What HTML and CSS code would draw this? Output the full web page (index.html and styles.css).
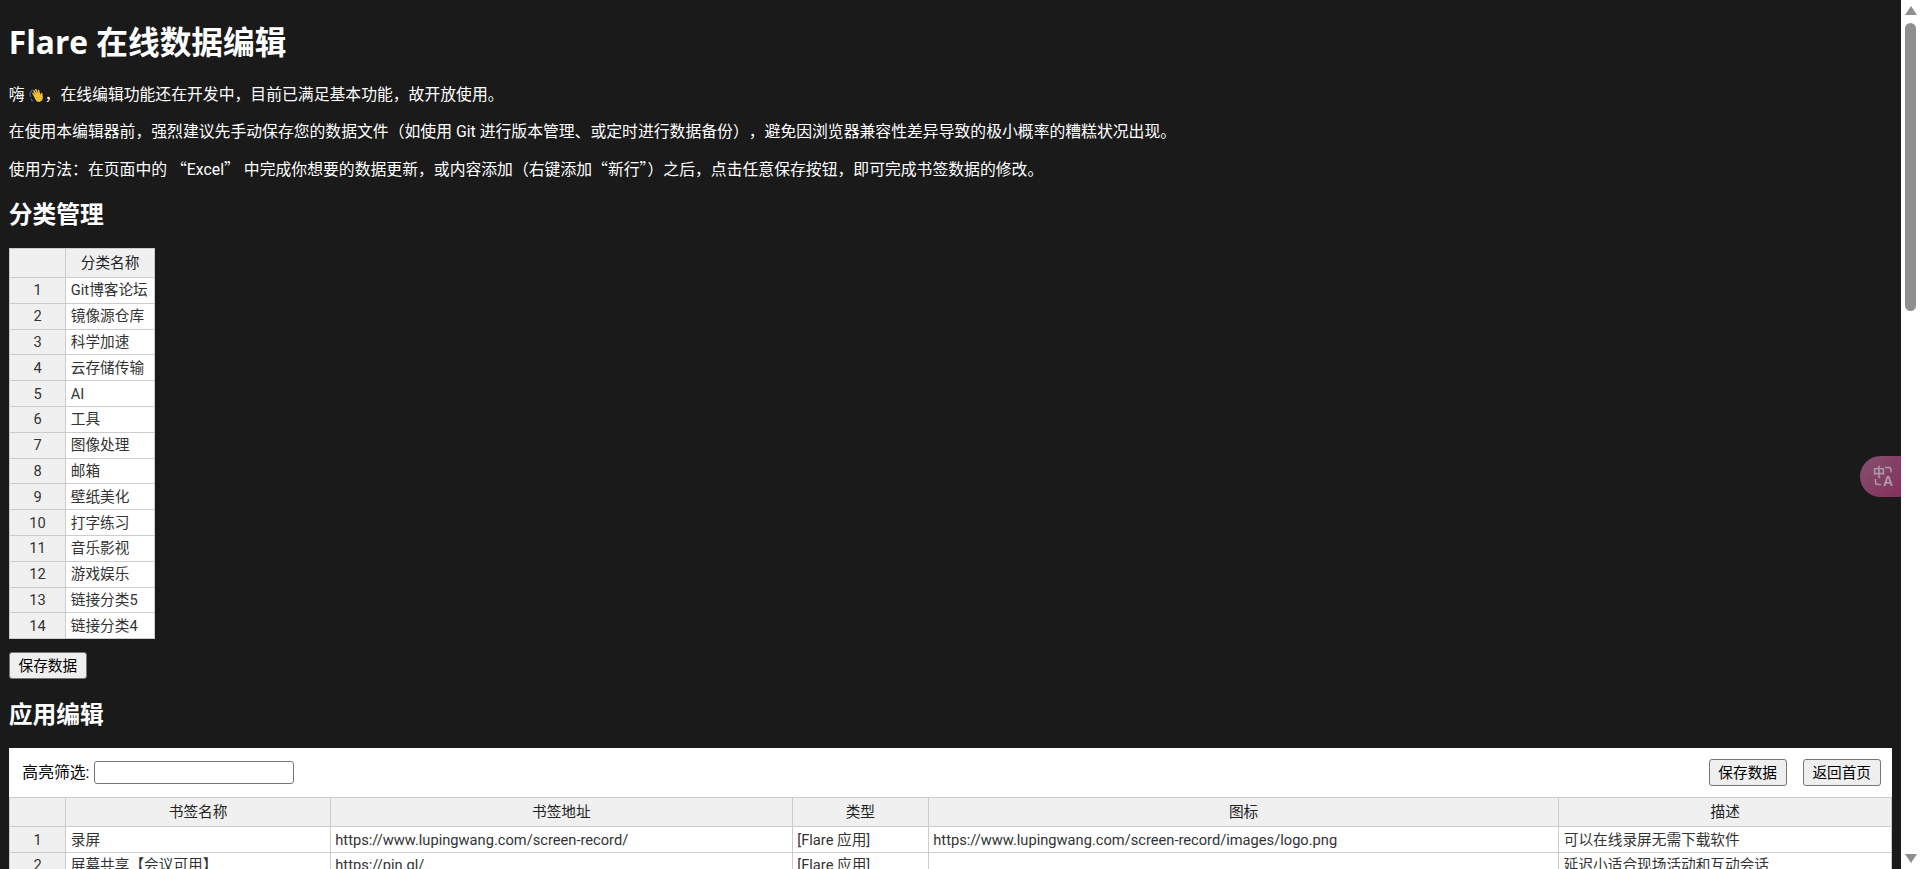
FILE: index.html
```html
<!DOCTYPE html>
<html lang="zh-CN">
<head>
<meta charset="utf-8">
<title>Flare 在线数据编辑</title>
<link rel="stylesheet" href="styles.css">
</head>
<body>
<main class="page">
<h1>Flare 在线数据编辑</h1>
<p>嗨 <svg class="hand" viewBox="0 0 16 16" aria-hidden="true"><path class="hand-wave" d="M3.500 2.500 1 6.500 1.500 10M2 11.500l1.500 3"/><path class="hand-palm" transform="rotate(-22 9 9)" d="M5 8 4.600 4.600c0-1 1.200-1 1.400-.1L6.800 7 6.500 2.600c0-1 1.300-1 1.500 0L8.600 6.500 8.700 2c.1-1 1.400-.9 1.400.1L10.200 7l.7-3.400c.2-.9 1.400-.7 1.300.2L12 9l.8-1.300c.5-.8 1.600-.2 1.200.6L13 12c-.8 2.200-2.400 3.200-4.400 3-2-.2-3-1.600-3.200-3.500Z"/></svg>，在线编辑功能还在开发中，目前已满足基本功能，故开放使用。</p>
<p class="no-trim">在使用本编辑器前，强烈建议先手动保存您的数据文件（如使用 Git 进行版本管理、或定时进行数据备份），避免因浏览器兼容性差异导致的极小概率的糟糕状况出现。</p>
<p>使用方法：在页面中的 <span class="fw">“</span>Excel<span class="fw">”</span> 中完成你想要的数据更新，或内容添加（右键添加<span class="fw">“</span>新行<span class="fw">”</span>）之后，点击任意保存按钮，即可完成书签数据的修改。</p>
<h2>分类管理</h2>
<table class="grid grid-cats">
<colgroup><col class="col-idx"><col class="col-cat"></colgroup>
<thead><tr><th></th><th>分类名称</th></tr></thead>
<tbody>
<tr><th>1</th><td>Git博客论坛</td></tr>
<tr><th>2</th><td>镜像源仓库</td></tr>
<tr><th>3</th><td>科学加速</td></tr>
<tr><th>4</th><td>云存储传输</td></tr>
<tr><th>5</th><td>AI</td></tr>
<tr><th>6</th><td>工具</td></tr>
<tr><th>7</th><td>图像处理</td></tr>
<tr><th>8</th><td>邮箱</td></tr>
<tr><th>9</th><td>壁纸美化</td></tr>
<tr><th>10</th><td>打字练习</td></tr>
<tr><th>11</th><td>音乐影视</td></tr>
<tr><th>12</th><td>游戏娱乐</td></tr>
<tr><th>13</th><td>链接分类5</td></tr>
<tr><th>14</th><td>链接分类4</td></tr>
</tbody>
</table>
<button class="btn btn-save-cats" type="button">保存数据</button>
<h2>应用编辑</h2>
<section class="panel">
<div class="toolbar">
<label class="filter">高亮筛选: <input class="filter-input" type="text"></label>
<div class="actions">
<button class="btn" type="button">保存数据</button>
<button class="btn" type="button">返回首页</button>
</div>
</div>
<table class="grid grid-apps">
<colgroup><col class="col-idx"><col class="col-name"><col class="col-url"><col class="col-type"><col class="col-icon"><col></colgroup>
<thead><tr><th></th><th>书签名称</th><th>书签地址</th><th>类型</th><th>图标</th><th>描述</th></tr></thead>
<tbody>
<tr><th>1</th><td>录屏</td><td>https://www.lupingwang.com/screen-record/</td><td>[Flare 应用]</td><td>https://www.lupingwang.com/screen-record/images/logo.png</td><td>可以在线录屏无需下载软件</td></tr>
<tr><th>2</th><td>屏幕共享【会议可用】</td><td>https://pin.gl/</td><td>[Flare 应用]</td><td></td><td>延迟小适合现场活动和互动会话</td></tr>
</tbody>
</table>
</section>
<button class="translate" type="button" aria-label="翻译"><span class="tr-zh">中</span><span class="tr-en">A</span><svg class="tr-arcs" viewBox="0 0 41 41" aria-hidden="true"><path d="M25 11.500h3.500q2.500 0 2.500 2.500v2.500M15.500 23v3q0 2.500 2.500 2.500h3"/></svg></button>
</main>
<aside class="scrollbar" aria-hidden="true">
<span class="sb-up"></span>
<span class="sb-thumb"></span>
<span class="sb-down"></span>
</aside>
</body>
</html>
```
FILE: styles.css
```css
html, body { height: 100%; }
body {
  margin: 0;
  display: flex;
  overflow: hidden;
  background: #1a1a1a;
  color: #fff;
  font-family: Roboto, "Noto Sans CJK SC", sans-serif;
  font-size: 15.84px;
  line-height: 21px;
}
.page {
  position: relative;
  flex: 1;
  min-width: 0;
  padding: 0 8.8px;
  overflow: hidden;
}
h1 {
  margin: 21.2px 0;
  font-family: "Open Sans", "Noto Sans CJK SC", sans-serif;
  font-size: 31.68px;
  line-height: 42px;
  font-weight: 700;
}
h2 {
  margin: 19.5px 0 17.5px;
  font-size: 23.76px;
  line-height: 31px;
  font-weight: 700;
}
p { margin: 15.84px 0; }
.no-trim { text-spacing-trim: space-all; }
.fw {
  font-family: "Noto Sans CJK SC", sans-serif;
  font-feature-settings: "fwid";
}
.hand {
  width: 16px;
  height: 16px;
  vertical-align: -3px;
}
.hand-palm { fill: #f5bf35; }
.hand-wave { fill: none; stroke: #3f6294; stroke-width: 1.4; }
.grid {
  border-collapse: collapse;
  table-layout: fixed;
  color: #333;
  background: #fff;
  font-size: 14.67px;
  line-height: 20px;
}
.grid th, .grid td {
  border: 1px solid #ccc;
  padding: 0 4.5px;
  height: 25.8px;
  box-sizing: border-box;
  overflow: hidden;
  white-space: nowrap;
}
.grid th {
  background: #f0f0f0;
  font-weight: 400;
  text-align: center;
}
.grid thead th { height: 29px; color: #222; }
.grid-cats { width: 145px; }
.col-idx { width: 56.5px; }
.col-cat { width: 88.5px; }
.btn {
  padding: 0 8.7px;
  height: 27px;
  border: 1px solid #767676;
  border-radius: 3px;
  background: #efefef;
  color: #000;
  font-family: inherit;
  font-size: 14.67px;
  line-height: 20px;
  cursor: pointer;
}
.btn-save-cats { display: block; margin: 13px 0 20.5px; }
.panel { background: #fff; }
.toolbar {
  display: flex;
  align-items: center;
  justify-content: space-between;
  height: 49px;
  padding: 0 11.5px 0 13.5px;
  color: #000;
}
.filter { display: flex; align-items: center; gap: 5px; }
.actions { display: flex; gap: 16px; }
.filter-input {
  width: 200px;
  height: 23px;
  box-sizing: border-box;
  border: 1px solid #767676;
  border-radius: 3px;
  background: #fff;
}
.grid-apps { width: 100%; }
.col-name { width: 264.5px; }
.col-url { width: 462px; }
.col-type { width: 136px; }
.col-icon { width: 630.5px; }
.translate {
  position: fixed;
  top: 456px;
  right: 19px;
  width: 41px;
  height: 41px;
  padding: 0;
  border: 0;
  border-radius: 21px 0 0 21px;
  background: linear-gradient(135deg, #84506f, #85305c);
  color: #b09aa8;
}
.tr-zh {
  position: absolute;
  left: 12.5px;
  top: 9.5px;
  font-size: 12px;
  line-height: 14px;
  font-weight: 700;
}
.tr-en {
  position: absolute;
  left: 23px;
  top: 18px;
  font-size: 14px;
  line-height: 14px;
  font-weight: 700;
}
.tr-arcs {
  position: absolute;
  left: 0;
  top: 0;
  width: 41px;
  height: 41px;
  fill: none;
  stroke: currentColor;
  stroke-width: 1.4;
}
.scrollbar {
  flex: 0 0 19px;
  display: flex;
  flex-direction: column;
  align-items: center;
  background: #fff;
}
.sb-up, .sb-down {
  width: 0;
  height: 0;
  border-left: 6.5px solid transparent;
  border-right: 6.5px solid transparent;
}
.sb-up {
  margin-top: 6px;
  border-bottom: 9.5px solid #8f8f8f;
}
.sb-thumb {
  width: 11px;
  height: 288px;
  margin-top: 7.5px;
  border-radius: 6px;
  background: #8f8f8f;
}
.sb-down {
  margin-top: auto;
  margin-bottom: 6px;
  border-top: 9.5px solid #8f8f8f;
}
```
